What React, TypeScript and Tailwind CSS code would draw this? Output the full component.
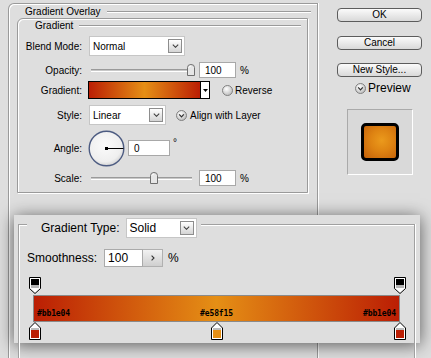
import React from "react";

function DropArrow() {
  return (
    <div className="w-[14px] h-[14px] border border-[#8d8d8d] bg-gradient-to-b from-white to-[#d4d4d4] flex items-center justify-center shrink-0">
      <svg width="7" height="4" viewBox="0 0 7 4">
        <path d="M0.8 0.6 L3.5 3.3 L6.2 0.6" fill="none" stroke="#404040" strokeWidth="1.1" />
      </svg>
    </div>
  );
}

function Select({ w, label, h = 20, text = "text-[10px]" }: { w: number; label: string; h?: number; text?: string }) {
  return (
    <div
      className={`bg-white border border-[#c6c6c6] flex items-center justify-between pl-[3px] pr-[2px] ${text}`}
      style={{ width: w, height: h }}
    >
      <span>{label}</span>
      <DropArrow />
    </div>
  );
}

function CircleCheck({ checked }: { checked: boolean }) {
  return (
    <svg width="11" height="11" viewBox="0 0 11 11" className="shrink-0">
      <defs>
        <radialGradient id="cc" cx="0.4" cy="0.35" r="0.7">
          <stop offset="0" stopColor="#ffffff" />
          <stop offset="1" stopColor="#b9b9b9" />
        </radialGradient>
      </defs>
      <circle cx="5.5" cy="5.5" r="5" fill="url(#cc)" stroke="#808080" strokeWidth="1" />
      {checked && <path d="M3.2 4.4 L5.5 6.8 L7.8 4.4" fill="none" stroke="#2e2e2e" strokeWidth="1.2" />}
    </svg>
  );
}

function Thumb() {
  return (
    <svg width="8" height="12" viewBox="0 0 8 12">
      <path d="M0.5 11.5 V3.5 Q0.5 0.5 4 0.5 Q7.5 0.5 7.5 3.5 V11.5 Z" fill="#e6e6e6" stroke="#6f6f6f" />
      <path d="M2 3.5 Q2 2 4 2" fill="none" stroke="#ffffff" />
    </svg>
  );
}

function Slider({ pos }: { pos: number }) {
  return (
    <div className="relative w-[107px] h-[14px]">
      <div className="absolute left-[2px] right-[4px] top-[6px] h-[3px] border-t border-t-[#9a9a9a] border-b border-b-white bg-[#c8c8c8]" />
      <div className="absolute top-[1px]" style={{ left: pos }}>
        <Thumb />
      </div>
    </div>
  );
}

function NumInput({ v, w = 37, h = 16 }: { v: string; w?: number; h?: number }) {
  return (
    <div
      className="bg-white border border-[#a8a8a8] flex items-center pl-[5px] text-[10px]"
      style={{ width: w, height: h }}
    >
      {v}
    </div>
  );
}

function Button({ label }: { label: string }) {
  return (
    <div className="w-[85px] h-[14px] rounded-[4px] border border-[#5c5c5c] bg-gradient-to-b from-[#fbfbfb] to-[#d9d9d9] flex items-center justify-center text-[10px] leading-none">
      {label}
    </div>
  );
}

function Label({ children }: { children: React.ReactNode }) {
  return <div className="w-[64px] mr-[7px] text-right text-[10px] shrink-0">{children}</div>;
}

function Dial() {
  return (
    <svg width="37" height="37" viewBox="0 0 37 37">
      <defs>
        <radialGradient id="dg" cx="0.45" cy="0.4" r="0.6">
          <stop offset="0" stopColor="#fbfbfb" />
          <stop offset="0.8" stopColor="#efefef" />
          <stop offset="1" stopColor="#d6d6d6" />
        </radialGradient>
      </defs>
      <circle cx="18.5" cy="18.5" r="17.3" fill="url(#dg)" stroke="#4d5c82" strokeWidth="1.4" />
      <line x1="18.5" y1="18.5" x2="35.5" y2="18.5" stroke="#000" strokeWidth="1" />
      <rect x="17" y="17" width="3" height="3" fill="#000" />
    </svg>
  );
}

function TopStop() {
  return (
    <svg width="12" height="17" viewBox="0 0 12 17">
      <path d="M0.5 0.5 H11.5 V11.5 L6 16.5 L0.5 11.5 Z" fill="#ffffff" stroke="#000" />
      <rect x="2" y="2" width="8" height="6" fill="#000" />
      <rect x="2" y="8" width="8" height="3" fill="#b5b5b5" />
    </svg>
  );
}

function BottomStop({ color }: { color: string }) {
  return (
    <svg width="12" height="18" viewBox="0 0 12 18">
      <path d="M6 0.5 L11.5 6 V17.5 H0.5 V6 Z" fill="#ffffff" stroke="#000" />
      <rect x="2" y="6" width="8" height="2" fill="#bdbdbd" />
      <rect x="2" y="8" width="8" height="8" fill={color} />
    </svg>
  );
}

export default function App() {
  return (
    <div className="relative w-[431px] h-[358px] overflow-hidden bg-[#dedede] text-black font-['Liberation_Sans',Arial,sans-serif]">
      <div className="flex h-full">
        {/* left content */}
        <div className="w-[318px] pl-[8px] pt-[3px] shrink-0">
          <div className="w-[310px] h-[420px] border-l border-t border-r border-[#9a9a9a] rounded-tl-[6px] shadow-[inset_1px_1px_0_#ffffff,1px_0_0_#ffffff]">
            <div className="h-[14px] pt-[1px] flex items-center pl-[16px] pr-[6px]">
              <span className="text-[10px] leading-none">Gradient Overlay</span>
              <div className="flex-1 ml-[6px] h-[2px] border-t border-t-[#9a9a9a] border-b border-b-white" />
            </div>
            <div className="ml-[8px] w-[291px] h-[175px] border border-[#9a9a9a] rounded-tl-[6px] shadow-[inset_1px_1px_0_#ffffff,1px_1px_0_#ffffff] flex flex-col">
              <div className="h-[13px] flex items-center pl-[17px] pr-[6px]">
                <span className="text-[10px] leading-none">Gradient</span>
                <div className="flex-1 ml-[6px] h-[2px] border-t border-t-[#9a9a9a] border-b border-b-white" />
              </div>
              {/* Blend mode */}
              <div className="mt-[4px] h-[20px] flex items-center">
                <Label>Blend Mode:</Label>
                <Select w={96} label="Normal" />
              </div>
              {/* Opacity */}
              <div className="mt-[6px] h-[16px] flex items-center">
                <Label>Opacity:</Label>
                <Slider pos={98} />
                <div className="ml-[3px]">
                  <NumInput v="100" />
                </div>
                <span className="ml-[4px] text-[10px]">%</span>
              </div>
              {/* Gradient */}
              <div className="mt-[3px] h-[18px] flex items-center">
                <Label>Gradient:</Label>
                <div className="-ml-[1px] w-[122px] h-[18px] border border-black flex bg-white">
                  <div className="w-[111px] h-full bg-[linear-gradient(90deg,#bb1e04,#e58f15_50%,#bb1e04)]" />
                  <div className="w-px h-full bg-black" />
                  <div className="flex-1 flex items-center justify-center">
                    <svg width="5" height="3" viewBox="0 0 5 3">
                      <path d="M0 0 H5 L2.5 3 Z" fill="#000" />
                    </svg>
                  </div>
                </div>
                <div className="ml-[12px] flex items-center gap-[2px] text-[10px]">
                  <CircleCheck checked={false} />
                  <span>Reverse</span>
                </div>
              </div>
              {/* Style */}
              <div className="mt-[6px] h-[20px] flex items-center">
                <Label>Style:</Label>
                <Select w={77} label="Linear" />
                <div className="ml-[10px] flex items-center gap-[3px] text-[10px]">
                  <CircleCheck checked={true} />
                  <span>Align with Layer</span>
                </div>
              </div>
              {/* Angle */}
              <div className="mt-[5px] h-[36px] flex items-center">
                <Label>Angle:</Label>
                <div className="-ml-[1px]">
                  <Dial />
                </div>
                <div className="ml-[3px]">
                  <NumInput v="0" w={42} h={16} />
                </div>
                <span className="ml-[3px] self-start mt-[8px] text-[10px] leading-none">°</span>
              </div>
              {/* Scale */}
              <div className="mt-[4px] h-[16px] flex items-center">
                <Label>Scale:</Label>
                <Slider pos={61} />
                <div className="ml-[3px]">
                  <NumInput v="100" />
                </div>
                <span className="ml-[4px] text-[10px]">%</span>
              </div>
            </div>
          </div>
        </div>

        {/* right column */}
        <div className="ml-[19px] pt-[8px] w-[85px] flex flex-col">
          <Button label="OK" />
          <div className="mt-[14px]">
            <Button label="Cancel" />
          </div>
          <div className="mt-[13px]">
            <Button label="New Style..." />
          </div>
          <div className="mt-[5px] h-[12px] pl-[18px] flex items-center gap-[2px]">
            <CircleCheck checked={true} />
            <span className="text-[12px] leading-none">Preview</span>
          </div>
          <div className="mt-[15px] ml-[10px] w-[66px] h-[66px] bg-[#d9d9d9] border border-t-[#aaaaaa] border-l-[#aaaaaa] border-r-white border-b-white flex items-center justify-center">
            <div className="w-[38px] h-[38px] rounded-[5px] border-[3px] border-black bg-[radial-gradient(circle_at_55%_45%,#eb9a1c_0%,#de8312_45%,#c3600a_100%)]" />
          </div>
        </div>
      </div>

      {/* floating gradient editor panel */}
      <div className="absolute left-[14px] top-[215px] w-[406px] h-[128px] bg-[#dedede] shadow-[0_2px_16px_rgba(0,0,0,0.6)] pl-[4px] pr-[5px] pt-[9px]">
        <div className="h-[140px] border-l border-t border-r border-[#a0a0a0] shadow-[inset_1px_1px_0_#ffffff,1px_0_0_#ffffff] flex flex-col">
          <div className="-mt-[7px] ml-[8px] self-start bg-[#dedede] pl-[14px] pr-[4px] h-[20px] flex items-center">
            <span className="text-[12px] leading-none">Gradient Type:</span>
            <div className="ml-[6px]">
              <Select w={71} h={20} label="Solid" text="text-[12px]" />
            </div>
          </div>
          <div className="mt-[11px] pl-[8px] h-[18px] flex items-center">
            <span className="text-[12px] leading-none">Smoothness:</span>
            <div className="ml-[7px] w-[39px] h-[18px] bg-white border border-[#aaaaaa] flex items-center pl-[3px] text-[12px]">
              100
            </div>
            <div className="w-[20px] h-[18px] border-t border-b border-r border-[#b0b0b0] bg-gradient-to-b from-[#f2f2f2] to-[#cfcfcf] flex items-center justify-center">
              <svg width="4" height="6" viewBox="0 0 4 6">
                <path d="M0.6 0.6 L3 3 L0.6 5.4" fill="none" stroke="#333" strokeWidth="1.1" />
              </svg>
            </div>
            <span className="ml-[5px] text-[12px] leading-none">%</span>
          </div>
          {/* stops + bar */}
          <div className="mt-[10px] relative h-[17px] ml-[10px] w-[378px]">
            <div className="absolute left-[0px] top-0">
              <TopStop />
            </div>
            <div className="absolute left-[365px] top-0">
              <TopStop />
            </div>
          </div>
          <div className="ml-[14px] mt-[1px] w-[367px] h-[27px] border border-[#8a8a8a] bg-[linear-gradient(90deg,#bb1e04,#e58f15_50%,#bb1e04)] flex items-end justify-between px-[3px] pb-[3px] font-['DejaVu_Sans_Mono',monospace] font-bold text-[8px] leading-none tracking-[-0.1px]">
            <span>#bb1e04</span>
            <span>#e58f15</span>
            <span>#bb1e04</span>
          </div>
          <div className="relative h-[18px] ml-[10px] w-[378px]">
            <div className="absolute left-[0px] top-0">
              <BottomStop color="#bb1e04" />
            </div>
            <div className="absolute left-[182px] top-0">
              <BottomStop color="#e58f15" />
            </div>
            <div className="absolute left-[365px] top-0">
              <BottomStop color="#bb1e04" />
            </div>
          </div>
        </div>
      </div>
    </div>
  );
}
